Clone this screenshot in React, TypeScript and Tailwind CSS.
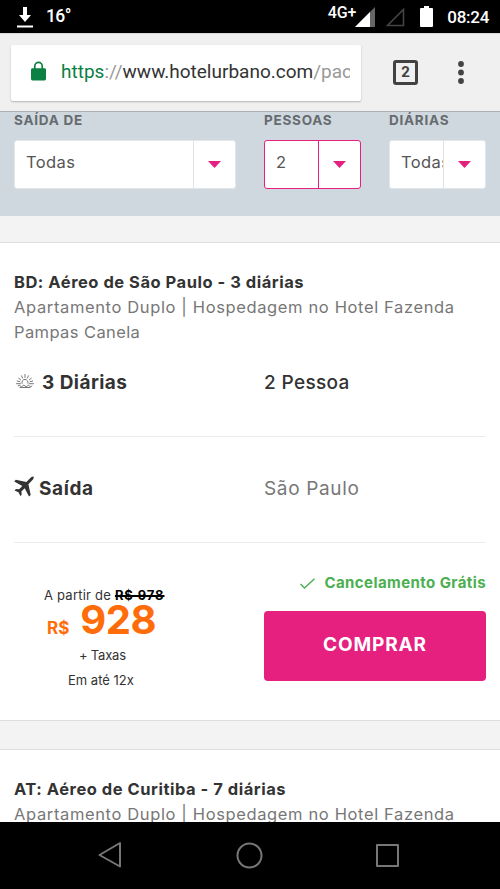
const Caret = () => (
  <svg width="13" height="7" viewBox="0 0 13 7" fill="#e6207f">
    <path d="M0 0h13L6.5 7z" />
  </svg>
);

const Sunrise = () => (
  <svg
    width="18"
    height="14"
    viewBox="0 0 18 14"
    fill="none"
    stroke="#555"
    strokeWidth="0.8"
    strokeLinecap="round"
  >
    <path d="M6 9.3a3.1 3.1 0 1 1 6 0M0.5 9.7h4M13.5 9.7h4M9 .5v3M5.5 1.8l1.1 2.3M12.5 1.8l-1.1 2.3M2.7 4.2l2 1.7M15.3 4.2l-2 1.7M1.2 7l2.6.7M16.8 7l-2.6.7" />
    <path d="M2 12q1.2-1.8 2.4 0q1.1 1.6 2.3 0q1.1-1.8 2.3 0q1.1 1.6 2.3 0q1.1-1.8 2.3 0q1.2 1.6 2.4 0M4 13.5h10" />
  </svg>
);

const Plane = () => (
  <svg width="20" height="21" viewBox="0 0 20 21" fill="#333">
    <path d="M19.5.8c.7.9-.2 2.4-1.5 3.7l-3.6 3.7 2.3 10.8-1.7 1.5-4.3-8.3-3.3 3.3.3 3.2-1.3 1.3-1.9-3.8-3.9-1.8 1.3-1.4 3.2.3 3.2-3.4L.2 5.5l1.6-1.7 10.6 2.3L16.1 2.3c1.2-1.2 2.7-2.2 3.4-1.5z" />
  </svg>
);

const StatusBar = () => (
  <div className="h-[33px] shrink-0 bg-black text-white flex items-center font-['Roboto'] font-medium">
    <svg className="ml-[17px]" width="16" height="22" viewBox="0 0 16 22" fill="#fff">
      <path d="M6 1h4v8h4l-6 7-6-7h4zM0 19.5h16v2H0z" />
    </svg>
    <span className="ml-[13px] text-[17.5px] tracking-[-0.6px]">16°</span>
    <div className="ml-auto flex items-center pr-[11px]">
      <span className="text-[16px] tracking-[-0.1px] mb-[8px]">4G+</span>
      <svg className="-ml-px mt-px" width="20" height="20" viewBox="0 0 20 20">
        <path d="M20 0v20H0z" fill="#666" />
        <path d="M15 5v15H0z" fill="#fff" />
      </svg>
      <svg className="ml-[10px] mt-px" width="20" height="20" viewBox="0 0 20 20">
        <path d="M18.5 2.5v16h-16z" fill="none" stroke="#444" strokeWidth="1.6" />
      </svg>
      <svg className="ml-[15px]" width="13" height="21" viewBox="0 0 13 21" fill="#fff">
        <path d="M4 0h5v2h3q1 0 1 1v17q0 1-1 1H1q-1 0-1-1V3q0-1 1-1h3z" />
      </svg>
      <span className="ml-[14px] mt-[2px] text-[17px] tracking-[-0.3px]">08:24</span>
    </div>
  </div>
);

const AddressBar = () => (
  <div className="h-[78px] shrink-0 bg-[#f0f0f0] border-t border-[#d8d8d8] flex items-center pl-[11px] font-['Roboto']">
    <div className="w-[350px] h-[56px] bg-white rounded-[2px] shadow-[0_1px_2px_rgba(0,0,0,0.25)] flex items-center pl-[20px]">
      <svg className="-mt-[3px]" width="15" height="20" viewBox="0 0 16 20">
        <path d="M4 8V4.8a4 4 0 0 1 8 0V8" fill="none" stroke="#0b8043" strokeWidth="1.8" />
        <rect y="7" width="16" height="13" rx="1.5" fill="#0b8043" />
      </svg>
      <div className="ml-[15px] w-[289px] overflow-hidden whitespace-nowrap text-[19px] text-[#333]">
        <span className="text-[#0b8043]">https</span>
        <span className="text-[#999]">://</span>www.hotelurbano.com
        <span className="text-[#999]">/pac</span>
      </div>
    </div>
    <div className="ml-[32px] size-[25px] border-[3px] border-[#424242] rounded-[3px] flex items-center justify-center text-[15px] font-bold text-[#424242]">
      2
    </div>
    <svg className="ml-[40px]" width="6" height="23" viewBox="0 0 6 23" fill="#424242">
      <circle cx="3" cy="3" r="2.9" />
      <circle cx="3" cy="11.5" r="2.9" />
      <circle cx="3" cy="20" r="2.9" />
    </svg>
  </div>
);

const filters = [
  { label: "SAÍDA DE", value: "Todas", width: "w-[222px]", active: false },
  { label: "PESSOAS", value: "2", width: "w-[97px]", active: true },
  { label: "DIÁRIAS", value: "Todas", width: "w-[97px]", active: false },
];

const Filters = () => (
  <div className="h-[105px] shrink-0 bg-[#cfd8de] border-t border-[#a9afb3] flex gap-[28px] px-[14px]">
    {filters.map((f) => (
      <div key={f.label} className={f.width}>
        <div className="h-[28px] text-[13.5px] leading-[16px] font-bold tracking-[0.75px] text-[#666b6f] whitespace-nowrap">
          {f.label}
        </div>
        <div
          className={`h-[49px] flex bg-white border rounded-[3px] ${
            f.active ? "border-[#e6207f]" : "border-[#e3e7ea]"
          }`}
        >
          <div className="flex-1 min-w-0 overflow-hidden pl-[11px] text-[16.5px] leading-[43px] tracking-[0.4px] text-[#555]">
            {f.value}
          </div>
          <div
            className={`w-[42px] shrink-0 border-l flex items-center justify-center ${
              f.active ? "border-[#e6207f]" : "border-[#dfe3e6]"
            }`}
          >
            <Caret />
          </div>
        </div>
      </div>
    ))}
  </div>
);

const PackageHeader = ({ title }: { title: string }) => (
  <div className="pt-[26px]">
    <h2 className="text-[16.5px] leading-[26px] font-bold tracking-[0.52px] text-[#333] whitespace-nowrap">
      {title}
    </h2>
    <p className="text-[16.5px] leading-[25px] tracking-[0.63px] text-[#777] whitespace-nowrap">
      Apartamento Duplo | Hospedagem no Hotel Fazenda
      <br />
      <span className="tracking-[0.4px]">Pampas Canela</span>
    </p>
  </div>
);

export default function App() {
  return (
    <div className="w-[500px] h-[889px] overflow-hidden flex flex-col bg-[#f3f3f3] font-['Inter',sans-serif]">
      <StatusBar />
      <AddressBar />
      <Filters />
      <div className="flex-1 min-h-0 overflow-hidden pt-[26px]">
        <div className="h-[479px] bg-white border-y border-[#dedede] px-[14px]">
          <PackageHeader title="BD: Aéreo de São Paulo - 3 diárias" />
          <div className="h-[92px] flex items-start border-b border-[#ececec] pt-[24px] text-[19px] leading-[28px] text-[#333]">
            <div className="w-[250px] flex items-center font-bold tracking-[0.45px]">
              <span className="ml-[2px] mr-[8px] -mt-[5px]">
                <Sunrise />
              </span>
              3 Diárias
            </div>
            <div className="font-medium tracking-[0.35px]">2 Pessoa</div>
          </div>
          <div className="h-[106px] flex items-center border-b border-[#ececec] text-[19px] leading-[28px] pb-[2px]">
            <div className="w-[250px] flex items-center font-bold tracking-[0.6px] text-[#333]">
              <span className="mr-[5px] -mt-[5px]">
                <Plane />
              </span>
              Saída
            </div>
            <div className="tracking-[0.65px] text-[#777]">São Paulo</div>
          </div>
          <div className="flex">
            <div className="w-[250px] pt-[42px] pl-[27px] text-[13px] text-[#333]">
              <div className="ml-[3px] leading-[20px] tracking-[0.22px] whitespace-nowrap">
                A partir de{" "}
                <b className="text-black tracking-[0.9px] line-through decoration-2">R$ 978</b>
              </div>
              <div className="ml-[6px] -mt-[5px] h-[40px] flex items-baseline leading-[40px] font-bold text-[#ff6d0a] whitespace-nowrap">
                <span className="text-[17px]">R$</span>
                <span className="ml-[11px] text-[40px] tracking-[-0.5px]">928</span>
              </div>
              <div className="ml-[38px] mt-[3px] leading-[25px] tracking-[-0.2px]">+ Taxas</div>
              <div className="ml-[27px] leading-[25px] whitespace-nowrap">Em até 12x</div>
            </div>
            <div className="w-[222px] pt-[28px]">
              <div className="flex items-center justify-end leading-[24px] text-[15px] font-bold tracking-[0.42px] text-[#4caf50] whitespace-nowrap">
                <svg className="mr-[9px]" width="15" height="11" viewBox="0 0 15 11" fill="none" stroke="#4caf50" strokeWidth="1.4">
                  <path d="M.5 6l4 4L14.5.7" />
                </svg>
                Cancelamento Grátis
              </div>
              <button className="mt-[16px] w-full h-[70px] pb-[2px] rounded-[4px] bg-[#e6207f] text-white text-[19px] font-bold tracking-[0.85px]">
                COMPRAR
              </button>
            </div>
          </div>
        </div>
        <div className="mt-[28px] bg-white border-t border-[#dedede] px-[14px]">
          <PackageHeader title="AT: Aéreo de Curitiba - 7 diárias" />
        </div>
      </div>
      <div className="h-[67px] shrink-0 bg-black">
        <svg width="500" height="67" viewBox="0 0 500 67" fill="none" stroke="#777" strokeWidth="2" strokeLinejoin="round">
          <path d="M120 21v23.5L99.5 33z" />
          <circle cx="249.5" cy="33.5" r="12" />
          <rect x="377" y="23" width="21" height="21" />
        </svg>
      </div>
    </div>
  );
}
